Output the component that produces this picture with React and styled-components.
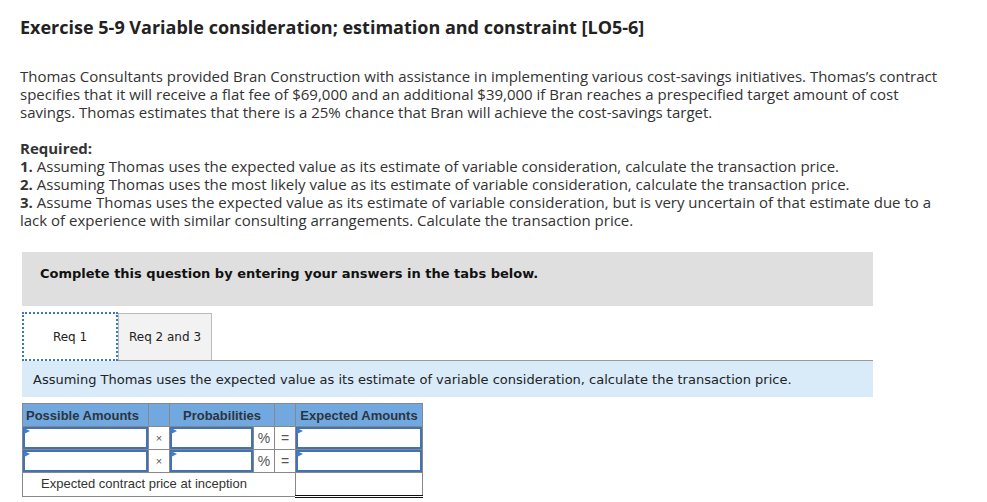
import React from "react";
import styled, { createGlobalStyle } from "styled-components";

const Global = createGlobalStyle`
  body {
    margin: 0;
    background: #fff;
    font-family: "Open Sans", "Liberation Sans", sans-serif;
  }
`;

const Page = styled.div`
  padding: 15px 0 0 20px;
  width: 930px;
`;

const Title = styled.h1`
  margin: 0;
  font-size: 18px;
  line-height: 24px;
  font-weight: 700;
  color: #222;
`;

const Text = styled.p`
  margin: ${(p) => p.$top || 0}px 0 0;
  font-size: 15px;
  line-height: 18px;
  color: #333;
  b {
    display: inline-block;
    line-height: 18px;
    font-weight: 700;
  }
`;

const Instructions = styled.div`
  margin: 23px 0 0 2px;
  width: 851px;
  height: 54px;
  background: #dfdfdf;
  padding: 14px 0 0 18px;
  box-sizing: border-box;
  font-family: "DejaVu Sans", Verdana, sans-serif;
  font-weight: 700;
  font-size: 13px;
  line-height: 16px;
  color: #111;
`;

const Tabs = styled.div`
  margin: 6px 0 0 2px;
  width: 851px;
  display: flex;
  align-items: flex-end;
  border-bottom: 1px solid #999;
`;

const Tab = styled.div`
  height: ${(p) => (p.$active ? 49 : 47)}px;
  width: ${(p) => p.$w}px;
  box-sizing: border-box;
  display: flex;
  align-items: center;
  justify-content: center;
  font-family: "DejaVu Sans", Verdana, sans-serif;
  font-size: 12px;
  color: #222;
  background: ${(p) => (p.$active ? "#fff" : "#f2f2f2")};
  border: ${(p) => (p.$active ? "2px dotted #3b78c4" : "1px solid #bbb")};
  border-bottom: ${(p) => (p.$active ? "2px dotted #3b78c4" : "none")};
  margin-bottom: ${(p) => (p.$active ? -1 : 0)}px;
`;

const Prompt = styled.div`
  margin-left: 2px;
  width: 851px;
  height: 36px;
  background: #d9eaf8;
  display: flex;
  align-items: center;
  padding-left: 11px;
  box-sizing: border-box;
  font-family: "DejaVu Sans", Verdana, sans-serif;
  font-size: 13px;
  color: #222;
`;

const Table = styled.table`
  margin: 6px 0 0 2px;
  border-collapse: collapse;
  font-family: "Liberation Sans", Arial, sans-serif;
  font-size: 13px;
  color: #333;
  table-layout: fixed;
  width: 400px;
`;

const Head = styled.th`
  background: #72a8e0;
  border: 1px solid #888;
  height: 22px;
  padding: 0 3px;
  font-weight: 700;
  color: #2b3540;
  text-align: ${(p) => p.$align || "center"};
  white-space: nowrap;
`;

const Cell = styled.td`
  border: 1px solid #888;
  height: 22px;
  padding: ${(p) => (p.$input ? "0" : "0 2px")};
  text-align: center;
  vertical-align: middle;
  font-size: ${(p) => p.$small || 13}px;
  color: #555;
`;

const Input = styled.div`
  position: relative;
  height: 22px;
  box-sizing: border-box;
  border: 2px solid #4173b3;
  background: #fff;
  &::before {
    content: "";
    position: absolute;
    left: -1px;
    top: -1px;
    border-top: 3px solid transparent;
    border-bottom: 3px solid transparent;
    border-left: 6px solid #3d7dd8;
  }
`;

const Label = styled.td`
  border: 1px solid #888;
  height: 21px;
  padding: 0 0 2px 18px;
  color: #333;
  font-size: 13px;
`;

const Total = styled.td`
  border: 1px solid #888;
  border-top: 1px solid #111;
  border-bottom: 3px double #111;
  height: 19px;
`;

const Row = () => (
  <tr>
    <Cell $input>
      <Input />
    </Cell>
    <Cell $small={11}>×</Cell>
    <Cell $input>
      <Input />
    </Cell>
    <Cell $small={14}>%</Cell>
    <Cell $small={14}>=</Cell>
    <Cell $input>
      <Input />
    </Cell>
  </tr>
);

export default function App() {
  return (
    <Page>
      <Global />
      <Title>Exercise 5-9 Variable consideration; estimation and constraint [LO5-6]</Title>
      <Text $top={28}>
        Thomas Consultants provided Bran Construction with assistance in implementing various
        cost-savings initiatives. Thomas’s contract specifies that it will receive a flat fee of
        $69,000 and an additional $39,000 if Bran reaches a prespecified target amount of cost
        savings. Thomas estimates that there is a 25% chance that Bran will achieve the
        cost-savings target.
      </Text>
      <Text $top={18}>
        <b>Required:</b>
        <br />
        <b>1.</b> Assuming Thomas uses the expected value as its estimate of variable
        consideration, calculate the transaction price.
        <br />
        <b>2.</b> Assuming Thomas uses the most likely value as its estimate of variable
        consideration, calculate the transaction price.
        <br />
        <b>3.</b> Assume Thomas uses the expected value as its estimate of variable
        consideration, but is very uncertain of that estimate due to a lack of experience with
        similar consulting arrangements. Calculate the transaction price.
      </Text>
      <Instructions>Complete this question by entering your answers in the tabs below.</Instructions>
      <Tabs>
        <Tab $active $w={96}>Req 1</Tab>
        <Tab $w={94}>Req 2 and 3</Tab>
      </Tabs>
      <Prompt>
        Assuming Thomas uses the expected value as its estimate of variable consideration,
        calculate the transaction price.
      </Prompt>
      <Table>
        <colgroup>
          <col style={{ width: 126 }} />
          <col style={{ width: 21 }} />
          <col style={{ width: 84 }} />
          <col style={{ width: 21 }} />
          <col style={{ width: 21 }} />
          <col style={{ width: 127 }} />
        </colgroup>
        <thead>
          <tr>
            <Head $align="left">Possible Amounts</Head>
            <Head />
            <Head colSpan={2}>Probabilities</Head>
            <Head />
            <Head>Expected Amounts</Head>
          </tr>
        </thead>
        <tbody>
          <Row />
          <Row />
          <tr>
            <Label colSpan={5}>Expected contract price at inception</Label>
            <Total />
          </tr>
        </tbody>
      </Table>
    </Page>
  );
}
